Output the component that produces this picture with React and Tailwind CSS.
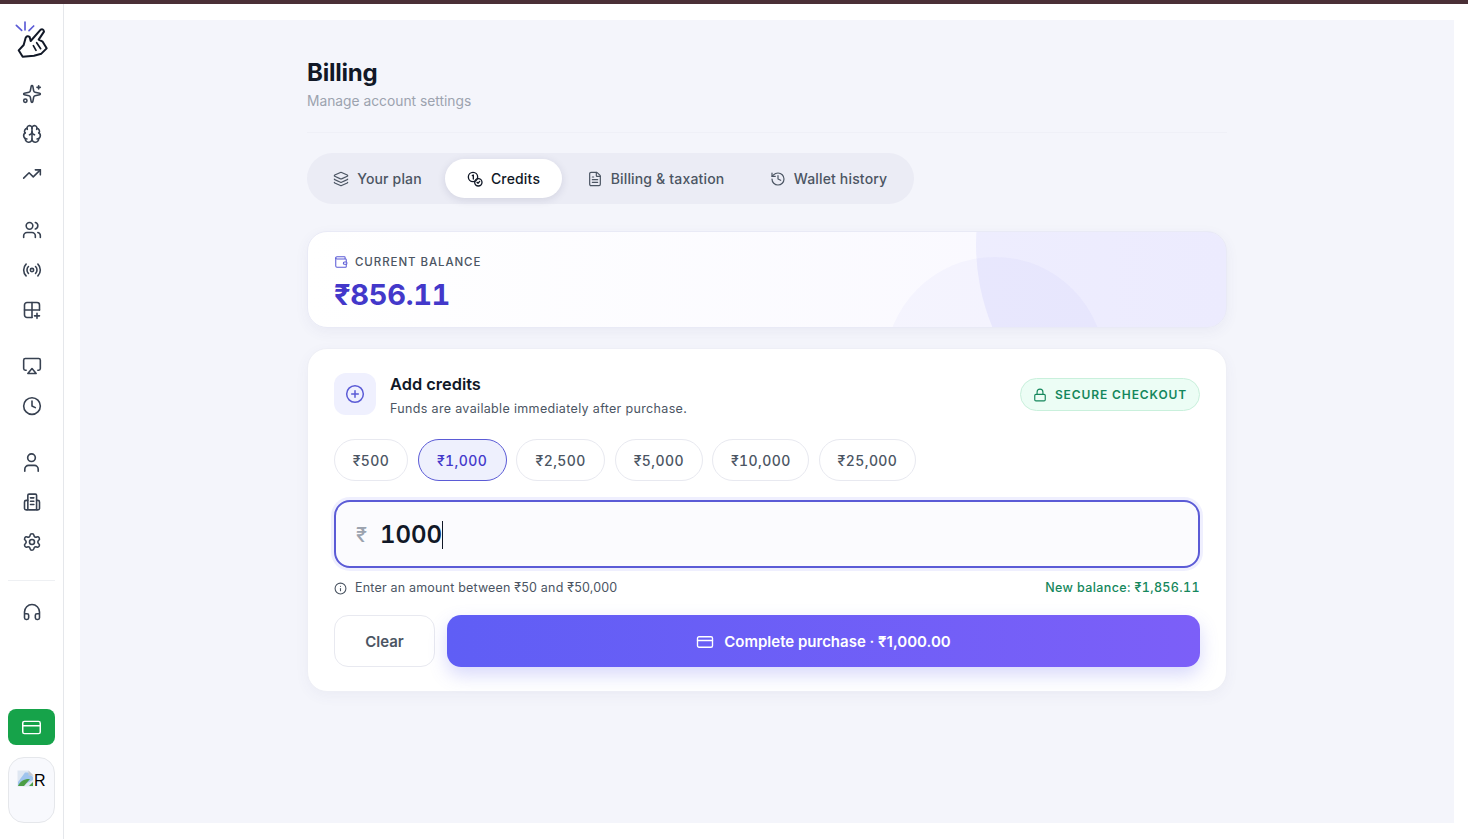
import {
  Airplay,
  Brain,
  CirclePlus,
  Clock,
  CreditCard,
  FileText,
  Headphones,
  History,
  Info,
  Layers,
  Lock,
  Radio,
  Settings,
  Sparkles,
  TrendingUp,
  User,
  Users,
  Wallet,
} from "lucide-react";

const font = { fontFamily: "Inter, 'Noto Sans', sans-serif" };

function IconHandLogo() {
  return (
    <svg viewBox="18 15 108 120" className="h-10 w-9" fill="none" strokeLinecap="round" strokeLinejoin="round">
      <g stroke="#5b5bd6" strokeWidth="5">
        <path d="M25 31 41 46" />
        <path d="M51 21v24" />
        <path d="M77 33 63 47" />
      </g>
      <path
        d="M44 125 32 106 47 90 53 68q5-8 12-2l3 12 30-34q8-4 10 6L92 74l12 6 12 20-16 16-22 6Z"
        stroke="#111827"
        strokeWidth="6"
      />
      <path d="M86 83 98 101M76 92l8 14" stroke="#111827" strokeWidth="5" />
    </svg>
  );
}

function IconGridPlus({ className, strokeWidth }) {
  return (
    <svg viewBox="0 0 24 24" className={className} fill="none" stroke="currentColor" strokeWidth={strokeWidth} strokeLinecap="round" strokeLinejoin="round">
      <path d="M12 21H6a3 3 0 0 1-3-3V6a3 3 0 0 1 3-3h12a3 3 0 0 1 3 3v6" />
      <path d="M3 12h18M12 3v18" />
      <path d="M18 16v6M15 19h6" />
    </svg>
  );
}

function IconOffice({ className, strokeWidth }) {
  return (
    <svg viewBox="0 0 24 24" className={className} fill="none" stroke="currentColor" strokeWidth={strokeWidth} strokeLinecap="round" strokeLinejoin="round">
      <rect x="7" y="2.5" width="10.5" height="19" rx="1.5" />
      <path d="M7 10H5a2 2 0 0 0-2 2v7.5a2 2 0 0 0 2 2h2" />
      <path d="M17.5 10H19a2 2 0 0 1 2 2v7.5a2 2 0 0 1-2 2h-1.5" />
      <path d="M10.2 7h4M10.2 11h4M10.2 15h4" />
    </svg>
  );
}

function IconPerson() {
  return <User className="h-[23px] w-[23px]" strokeWidth={1.7} />;
}

function IconCredits({ className }) {
  return (
    <svg viewBox="0 0 24 24" className={className} fill="none" stroke="currentColor" strokeWidth="2" strokeLinecap="round" strokeLinejoin="round">
      <circle cx="9" cy="9" r="7" />
      <path d="M8 7l1.5-1v6" />
      <circle cx="17" cy="17" r="5.5" />
      <path d="M15 17l1.5 1.5 2.5-3" />
    </svg>
  );
}

function IconBrokenImage() {
  return (
    <svg viewBox="0 0 17 17" className="h-[17px] w-[17px] shrink-0">
      <path d="M.5.5h11l5 5v11H.5Z" fill="#dfe7f2" />
      <path d="M1 12 8 2.5h3L16 7v3L4 16H1Z" fill="#9fc4ee" />
      <path d="M1 16c2-5 7-7.500 12-7l-6 7Z" fill="#4c9e45" />
      <path d="M12 16l4-4v4Z" fill="#4c9e45" />
      <path d="M11.500.5v5h5Z" fill="#c3c9d2" />
    </svg>
  );
}

const navGroups = [
  [Sparkles, Brain, TrendingUp],
  [Users, Radio, IconGridPlus],
  [Airplay, Clock],
  [IconPerson, IconOffice, Settings],
];

function Sidebar() {
  return (
    <aside className="flex w-16 shrink-0 flex-col border-r border-[#e5e7eb] bg-white px-2 pb-4 text-[#374151]">
      <div className="flex h-[70px] items-start justify-center pt-4">
        <IconHandLogo />
      </div>
      <div className="flex flex-col gap-4">
        {navGroups.map((group, i) => (
          <div key={i} className="flex flex-col">
            {group.map((Icon, j) => (
              <div key={j} className="flex h-10 items-center justify-center">
                <Icon className="h-5 w-5" strokeWidth={1.9} />
              </div>
            ))}
          </div>
        ))}
      </div>
      <div className="mt-[18px] h-px bg-[#eef0f3]" />
      <div className="mt-[11px] flex h-10 items-center justify-center">
        <Headphones className="h-5 w-5" strokeWidth={1.9} />
      </div>
      <div className="mt-auto flex h-9 items-center justify-center rounded-lg bg-[#16a34a] text-white">
        <CreditCard className="h-[21px] w-[21px]" strokeWidth={1.7} />
      </div>
      <div className="mt-3 h-[66px] rounded-2xl border border-[#e5e7eb] bg-[#f8f9fd] pl-2 pt-3">
        <div className="flex items-end">
          <IconBrokenImage />
          <span className="text-[16px] leading-[12px] text-black" style={{ fontFamily: "'Liberation Sans', sans-serif" }}>
            R
          </span>
        </div>
      </div>
    </aside>
  );
}

const tabs = [
  { label: "Your plan", Icon: Layers, w: "w-[132px] pr-[3px]" },
  { label: "Credits", Icon: IconCredits, w: "w-[117px]", active: true },
  { label: "Billing & taxation", Icon: FileText, w: "w-[183px] pl-1" },
  { label: "Wallet history", Icon: History, w: "w-[163px] pl-1" },
];

function Tabs() {
  return (
    <div className="mt-[20px] flex w-[607px] items-center rounded-[26px] bg-[#ebecf5] p-1.5">
      {tabs.map(({ label, Icon, w, active }) => (
        <div
          key={label}
          className={`flex h-[39px] items-center justify-center gap-2 rounded-[20px] text-[14px] font-medium tracking-[0.012em] ${w} ${
            active ? "bg-white text-[#111827] shadow-[0_2px_8px_rgba(30,30,80,0.12)]" : "text-[#4b5563]"
          }`}
        >
          <Icon className="h-4 w-4" strokeWidth={1.8} />
          {label}
        </div>
      ))}
    </div>
  );
}

function BalanceCard() {
  return (
    <div className="relative mt-[27px] h-[97px] overflow-hidden rounded-[20px] border border-[#e9eaf6] bg-gradient-to-r from-white to-[#f8f7ff] px-[26px] pt-[21px] shadow-[0_4px_14px_rgba(70,70,140,0.06)]">
      <div className="absolute left-[668px] top-[-201px] h-[428px] w-[428px] rounded-full bg-[#6366f1]/[0.08]" />
      <div className="absolute left-[577px] top-[25px] h-[220px] w-[220px] rounded-full bg-[#6366f1]/[0.04]" />
      <div className="relative flex items-center gap-[7px] text-[11.5px] font-medium leading-[18px] tracking-[0.08em] text-[#4b5563]">
        <Wallet className="h-[14px] w-[14px] text-[#5b5bd6]" strokeWidth={1.8} />
        CURRENT BALANCE
      </div>
      <div className="relative mt-1 text-[29px] font-bold tabular-nums leading-[40px] tracking-[-0.01em] text-[#4338ca]">₹856.11</div>
    </div>
  );
}

const amounts = [
  { label: "₹500", w: "w-[74px]" },
  { label: "₹1,000", w: "w-[89px]", active: true },
  { label: "₹2,500", w: "w-[89px]" },
  { label: "₹5,000", w: "w-[88px]" },
  { label: "₹10,000", w: "w-[97px]" },
  { label: "₹25,000", w: "w-[97px]" },
];

function AddCredits() {
  return (
    <div className="mt-5 rounded-[20px] border border-[#eeeff6] bg-white px-[26px] pb-6 pt-6 shadow-[0_4px_14px_rgba(70,70,140,0.05)]">
      <div className="flex items-start justify-between">
        <div className="flex items-start gap-[14px]">
          <div className="flex h-[42px] w-[42px] items-center justify-center rounded-xl bg-[#eff0fe] text-[#5b5bd6]">
            <CirclePlus className="h-5 w-5" strokeWidth={1.8} />
          </div>
          <div>
            <div className="text-[16.4px] font-semibold leading-[22px] text-[#111827]">Add credits</div>
            <div className="mt-[5px] text-[12.5px] leading-[18px] tracking-[0.027em] text-[#4b5563]">
              Funds are available immediately after purchase.
            </div>
          </div>
        </div>
        <div className="mt-[5px] flex h-[33px] w-[180px] items-center justify-center gap-2 rounded-full border border-[#c9f0dc] bg-[#ecfdf5] text-[12px] font-semibold tracking-[0.075em] text-[#15875c]">
          <Lock className="h-[14px] w-[14px]" strokeWidth={2} />
          SECURE CHECKOUT
        </div>
      </div>

      <div className="mt-[21px] flex gap-[9.6px]">
        {amounts.map(({ label, w, active }) => (
          <div
            key={label}
            className={`flex h-[42px] items-center justify-center rounded-[21px] border text-[14px] font-medium tabular-nums tracking-[0.03em] ${w} ${
              active ? "border-[#5b5bd6] bg-[#eef0fd] text-[#4338ca]" : "border-[#e8e9f0] bg-white text-[#4b5563]"
            }`}
          >
            {label}
          </div>
        ))}
      </div>

      <div className="mt-[19px] flex h-[68px] items-center rounded-2xl border-2 border-[#5b5bd6] bg-[#fbfbfe] pl-5 pt-0.5 shadow-[0_0_0_3px_rgba(99,102,241,0.1)]">
        <span className="text-[20px] font-medium text-[#9ca3af]">₹</span>
        <span className="ml-[13px] text-[24px] font-semibold tabular-nums leading-[34px] text-[#111827]">1000</span>
        <span className="h-7 w-px bg-[#111827]" />
      </div>

      <div className="mt-[11px] flex items-center justify-between text-[12.5px] leading-[18px]">
        <div className="flex items-center gap-2 tracking-[0.015em] text-[#4b5563]">
          <Info className="h-[13px] w-[13px]" strokeWidth={2} />
          Enter an amount between ₹50 and ₹50,000
        </div>
        <div className="font-medium tabular-nums tracking-[0.03em] text-[#15875c]">New balance: ₹1,856.11</div>
      </div>

      <div className="mt-[18px] flex gap-3">
        <div className="flex h-[52px] w-[101px] items-center justify-center rounded-[14px] border border-[#e8e9f0] bg-white pt-0.5 text-[15px] font-semibold text-[#4b5563]">
          Clear
        </div>
        <div className="flex h-[52px] flex-1 items-center justify-center gap-[10px] rounded-[14px] bg-gradient-to-r from-[#5f5ef5] to-[#7c5ff8] pt-0.5 text-[15px] font-semibold text-white shadow-[0_8px_18px_rgba(99,102,241,0.25)]">
          <CreditCard className="h-[18px] w-[18px]" strokeWidth={1.8} />
          Complete purchase · ₹1,000.00
        </div>
      </div>
    </div>
  );
}

export default function App() {
  return (
    <div className="flex h-screen flex-col overflow-hidden bg-white" style={font}>
      <div className="h-1 shrink-0 bg-[#4a2f36]" />
      <div className="flex min-h-0 flex-1">
        <Sidebar />
        <main className="flex-1 pb-4 pl-4 pr-[14px] pt-4">
          <div className="h-full bg-[#f4f5fb]">
            <div className="mx-auto w-[920px] pt-[37px]">
              <h1 className="text-[24px] font-bold leading-[32px] tracking-[-0.01em] text-[#111827]">Billing</h1>
              <p className="mt-0.5 text-[13.8px] leading-5 text-[#9ca3af]">Manage account settings</p>
              <div className="mt-[21px] h-px bg-[#eff0f7]" />
              <Tabs />
              <BalanceCard />
              <AddCredits />
            </div>
          </div>
        </main>
      </div>
    </div>
  );
}
